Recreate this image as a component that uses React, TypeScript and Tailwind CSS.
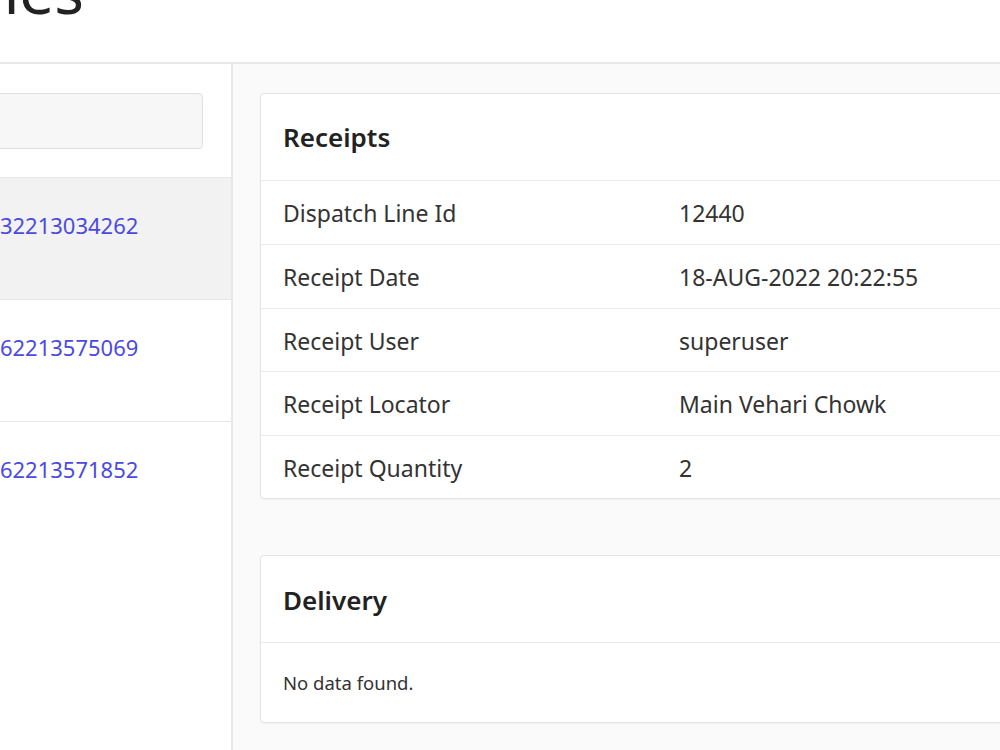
const lines = [
  { id: '1660832213034262', active: true },
  { id: '1660862213575069', active: false },
  { id: '1660862213571852', active: false },
];

const receipt = [
  ['Dispatch Line Id', '12440'],
  ['Receipt Date', '18-AUG-2022 20:22:55'],
  ['Receipt User', 'superuser'],
  ['Receipt Locator', 'Main Vehari Chowk'],
  ['Receipt Quantity', '2'],
];

export default function App() {
  return (
    <div className="w-[1000px] h-[750px] overflow-hidden bg-white text-[#333] font-['Noto_Sans',sans-serif]">
      {/* Page title */}
      <header className="h-[64px] border-b-2 border-[#e8e8e8] overflow-hidden">
        <h1 className="-ml-[338px] -mt-[47px] text-[62px] leading-[1.2] font-normal text-[#222] whitespace-nowrap">
          Dispatch Lines
        </h1>
      </header>

      <div className="flex h-[686px]">
        {/* Sidebar */}
        <aside className="w-[320px] -ml-[87px] shrink-0 bg-white border-r-2 border-[#e8e8e8]">
          <div className="pt-[29px] pb-[28px] pl-[24px] pr-[28px]">
            <div className="h-[56px] bg-[#f7f7f7] border border-[#e0e0e0] rounded-[4px]" />
          </div>
          <ul className="border-t border-[#e6e6e6]">
            {lines.map((l, i) => (
              <li
                key={l.id}
                className={`h-[122px] pt-[31px] pl-[24px] ${i < lines.length - 1 ? 'border-b border-[#e6e6e6]' : ''} ${l.active ? 'bg-[#f2f2f2]' : 'bg-white'}`}
              >
                <a className="text-[22px] text-[#4b4ae0] whitespace-nowrap">{l.id}</a>
              </li>
            ))}
          </ul>
        </aside>

        {/* Details */}
        <main className="flex-1 bg-[#fafafa] pl-[27px] pt-[29px] overflow-hidden">
          <section className="w-[800px] bg-white border border-[#e3e3e3] rounded-[4px] shadow-[0_1px_2px_rgba(0,0,0,0.04)]">
            <div className="h-[87px] flex items-center px-[22px] border-b border-[#ebebeb]">
              <h2 className="text-[26px] font-semibold text-[#222]">Receipts</h2>
            </div>
            {receipt.map(([label, value], i) => (
              <div
                key={label}
                className={`h-[63.4px] pt-[2px] flex items-center text-[23px] ${i > 0 ? 'border-t border-[#ebebeb]' : ''}`}
              >
                <div className="w-[396px] pl-[22px]">{label}</div>
                <div className="pl-[22px]">{value}</div>
              </div>
            ))}
          </section>

          <section className="mt-[56px] w-[800px] bg-white border border-[#e3e3e3] rounded-[4px] shadow-[0_1px_2px_rgba(0,0,0,0.04)]">
            <div className="h-[87px] pt-[3px] flex items-center px-[22px] border-b border-[#ebebeb]">
              <h2 className="text-[26px] font-semibold text-[#222]">Delivery</h2>
            </div>
            <div className="h-[79px] flex items-center px-[22px] text-[18.5px]">No data found.</div>
          </section>
        </main>
      </div>
    </div>
  );
}
